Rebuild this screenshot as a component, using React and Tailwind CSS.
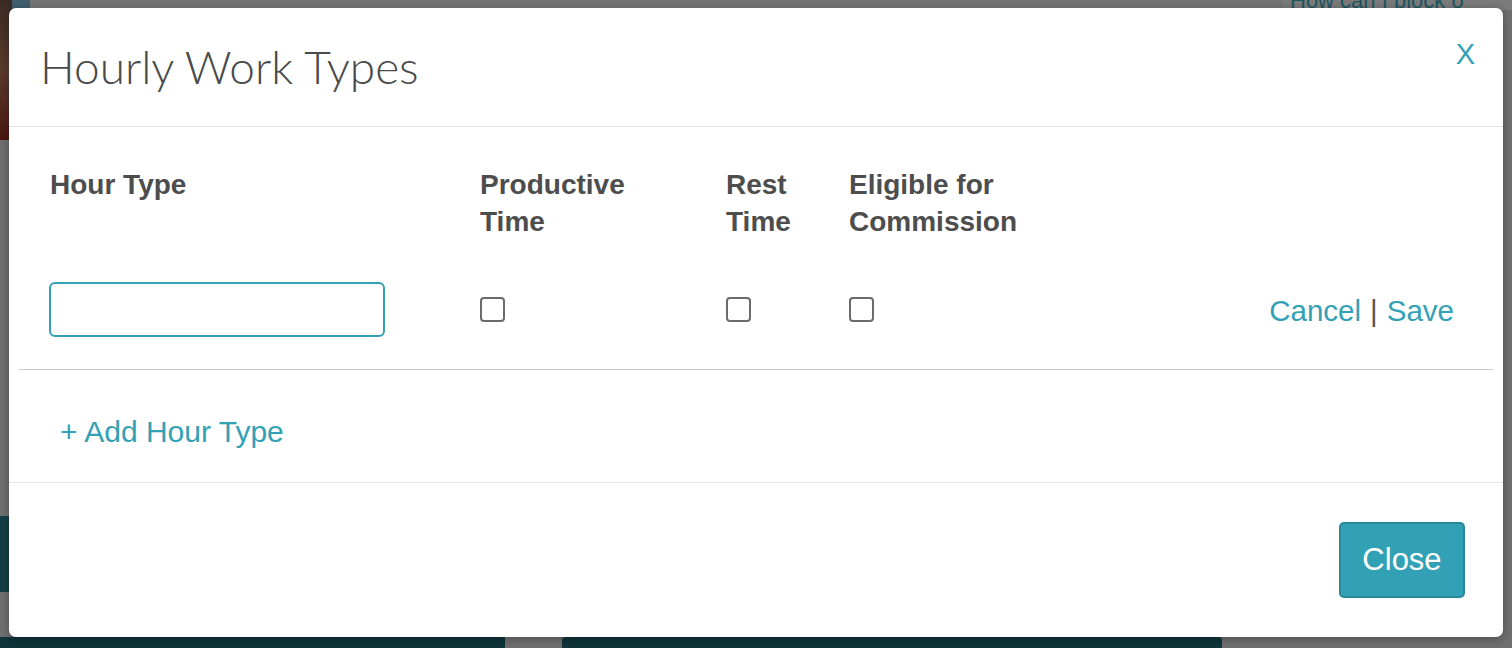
import React from "react";

function Checkbox() {
  return (
    <div className="w-[25px] h-[25px] border-2 border-[#6b6b6b] rounded-[4px] bg-white" />
  );
}

export default function App() {
  return (
    <div className="relative w-[1512px] h-[648px] overflow-hidden bg-[#6f6f6f]" style={{ fontFamily: '"Liberation Sans", Arial, sans-serif' }}>
      {/* dimmed page behind overlay */}
      <div className="flex flex-col h-full">
        <div className="flex h-[140px]">
          <div className="w-[12px] bg-gradient-to-b from-[#3b2a22] via-[#5a3b2c] to-[#4a1812]" />
          <div className="w-[18px] h-[10px] bg-[#3f5f6e]" />
          <div className="flex-1 h-[10px] bg-[#747474] border-b border-[#666]" />
          <div className="w-[230px] h-[10px] bg-[#7a7a7a] pl-[8px] text-[#1d5560] text-[22px] leading-[10px] whitespace-nowrap overflow-hidden">
            <span className="relative top-[-4px]">How can I block o</span>
          </div>
        </div>
        <div className="flex-1" />
        <div className="flex h-[76px]">
          <div className="w-[12px] bg-[#133f45]" />
        </div>
        <div className="h-[45px]" />
        <div className="flex h-[11px]">
          <div className="w-[505px] bg-[#0f3439]" />
          <div className="w-[57px]" />
          <div className="w-[660px] bg-[#0f3439] rounded-t-[4px]" />
        </div>
      </div>

      {/* modal */}
      <div className="absolute left-[9px] top-[8px] w-[1494px] h-[629px] bg-white rounded-[7px] shadow-[0_2px_8px_rgba(0,0,0,0.3)] flex flex-col">
        <div className="flex items-start justify-between pl-[31px] pr-[28px] py-[34px] border-b border-[#e5e5e5]">
          <h1 className="text-[46px] leading-[50px] font-light text-[#4a4a4a]" style={{ fontFamily: 'Lato, "Open Sans", sans-serif' }}>
            Hourly Work Types
          </h1>
          <button className="text-[29px] leading-[30px] text-[#33a1b5] mt-[-3px]">
            X
          </button>
        </div>

        <div className="flex-1 px-[10px] pt-[39px]">
          <div className="grid grid-cols-[461px_246px_123px_1fr_auto] pr-[41px] text-[28px] leading-[37px] font-bold text-[#4d4d4d]">
            <div className="pl-[31px]">Hour Type</div>
            <div>Productive<br />Time</div>
            <div>Rest<br />Time</div>
            <div>Eligible for<br />Commission</div>
            <div />
          </div>
          <div className="grid grid-cols-[461px_246px_123px_1fr_auto] items-center pr-[39px] pt-[42px] pb-[32px] border-b border-[#cccccc]">
            <div className="pl-[30px]">
              <input className="w-[336px] h-[55px] border-2 border-[#33a1b5] rounded-[6px] outline-none px-3 text-[22px]" />
            </div>
            <div><Checkbox /></div>
            <div><Checkbox /></div>
            <div><Checkbox /></div>
            <div className="text-[29.5px] leading-[34px] pt-[3px] whitespace-nowrap">
              <span className="text-[#33a1b5]">Cancel</span>
              <span className="text-[#555] mx-[9px]">|</span>
              <span className="text-[#33a1b5]">Save</span>
            </div>
          </div>
          <div className="pl-[41px] pt-[45px] text-[30px] leading-[33px] text-[#33a1b5]">
            + Add Hour Type
          </div>
        </div>

        <div className="h-[155px] border-t border-[#e5e5e5] flex items-center justify-end pr-[38px]">
          <button className="w-[126px] h-[76px] bg-[#33a1b5] border-2 border-[#25899b] rounded-[5px] text-white text-[31px]">
            Close
          </button>
        </div>
      </div>
    </div>
  );
}
